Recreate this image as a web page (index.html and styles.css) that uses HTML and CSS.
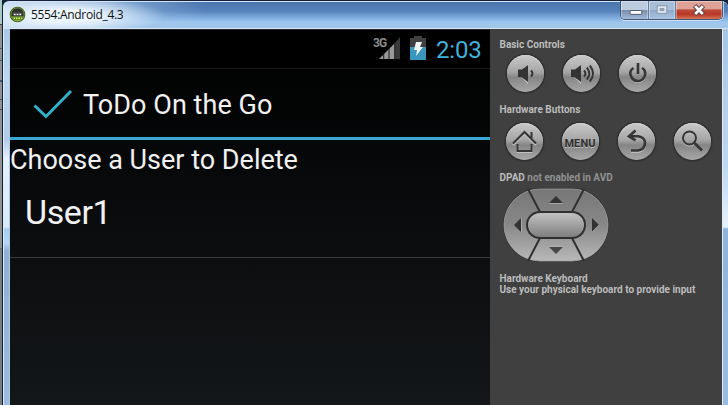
FILE: index.html
```html
<!DOCTYPE html>
<html lang="en">
<head>
<meta charset="utf-8">
<title>5554:Android_4.3</title>
<link rel="stylesheet" href="styles.css">
</head>
<body>
<div class="desktop">
  <div class="behind"></div>
  <main class="window">
    <header class="titlebar">
      <svg class="app-icon" viewBox="0 0 18 18"><circle cx="9" cy="9" r="8.300" fill="#47651f"/><circle cx="9" cy="9" r="7.200" fill="#8fb83c"/><path d="M2.500 11V7.500Q3.500 2.500 9 2.500t6.500 5V11z" fill="#303430"/><path d="M4 7.500h10" stroke="#555c50"/><path d="M5 9h2m1 0h2m1 0h2" stroke="#fff" stroke-width="1.500"/><path d="M3 12h12l-1.500 2.500h-9z" fill="#547a21"/><path d="M5 13h1.500m1 0H9m1 0h1.500m1 0h1" stroke="#d8ff76" stroke-width="1.500"/></svg>
      <h1 class="caption">5554:Android_4.3</h1>
      <div class="controls">
        <div class="control minimize"><svg viewBox="0 0 28 19"><rect x="9.500" y="9.500" width="12" height="4" rx=".5" fill="#fff" stroke="#505c70"/></svg></div>
        <div class="control maximize"><svg viewBox="0 0 27 19"><path d="M8.500 4.500h10v8h-10z" fill="#dce4ec" stroke="#8896a8"/><path d="M11.500 7.500h4v2h-4z" fill="#9dacbf" stroke="#8896a8"/></svg></div>
        <div class="control close"><svg viewBox="0 0 47 19"><path d="M19 4.500l9 9m0-9l-9 9" stroke="#59434c" stroke-width="4.800"/><path d="M19.600 5l7.800 8m0-8l-7.800 8" stroke="#fff" stroke-width="2.800"/></svg></div>
      </div>
    </header>
    <div class="content">
      <div class="edge-left"></div>
      <section class="screen">
        <div class="statusbar">
          <div class="signal">
            <span class="network">3G</span>
            <svg class="bars" viewBox="0 0 28 24"><path d="M6 23L22 7v16z" fill="#999"/><path d="M22 7l5-6v22h-5z" fill="#393939"/><path d="M10.700 17v6M16 12v11M21.700 7v16" stroke="#1b1b1b"/></svg>
          </div>
          <svg class="battery" viewBox="0 0 16 24"><path d="M0 2h4V0h8v2h4v9H0z" fill="#404040"/><path d="M0 11h16v13H0z" fill="#3b96be"/><path d="M6 6h6l-2 5h3l-7 9 1-6H4z" fill="#f0f4f5"/></svg>
          <span class="clock">2:03</span>
        </div>
        <div class="actionbar">
          <svg class="check" viewBox="0 0 40 32"><path d="M1.500 16.500L13 27.500 38 2" fill="none" stroke="#2fb2ca" stroke-width="3"/></svg>
          <h2 class="app-title">ToDo On the Go</h2>
        </div>
        <p class="prompt">Choose a User to Delete</p>
        <div class="user-row"><span class="user-name">User1</span></div>
      </section>
      <aside class="panel">
        <h3 class="label basic">Basic Controls</h3>
        <div class="buttons first">
          <div class="round"><svg viewBox="0 0 37 37"><path class="glow" d="M11 15h4l6-6v20l-6-6h-4z"/><path class="solid" d="M11 14.500h4l6-4.500v17l-6-4.500h-4z"/><path class="line" d="M24 15.500q3 3 0 6"/></svg></div>
          <div class="round"><svg viewBox="0 0 37 37"><path class="glow" d="M8 15h4l6-6v20l-6-6H8z"/><path class="solid" d="M8 14.500h4l6-4.500v17l-6-4.500H8z"/><path class="line" d="M21 15.500q3 3 0 6m2.800-9q5 6 0 12m3-14q6.500 8 0 16"/></svg></div>
          <div class="round"><svg viewBox="0 0 37 37"><path class="shine" d="M14.500 14q-4 2.500-3 7 2 6 7.500 6t7-6q1-4.500-3-7"/><path class="line power" d="M14.500 13q-4 2.500-3 7 2 6 7.500 6t7-6q1-4.500-3-7M19 8v11"/></svg></div>
        </div>
        <h3 class="label hardware">Hardware Buttons</h3>
        <div class="buttons second">
          <div class="round"><svg viewBox="0 0 37 37"><path class="shine" d="M7 22L18.500 10.500 30 22M11.500 22v7h14v-7"/><path class="line" d="M7 20.500L18.500 9 30 20.500M25.500 9v6M11.500 21v7h14v-7"/></svg></div>
          <div class="round"><span class="menu">MENU</span></div>
          <div class="round"><svg viewBox="0 0 37 37"><path class="shine" d="M11 14h9q7 1 7 7.500T20 29h-7"/><path class="line back" d="M17.500 7.500L11 13.300l6.500 4M11 13.300h9q7 1 7 7T20 27.500h-7"/></svg></div>
          <div class="round"><svg viewBox="0 0 37 37"><circle class="shine" cx="15.500" cy="16" r="6.500"/><circle class="line" cx="15.500" cy="15" r="6.500"/><path class="line back" d="M20.500 20l7.500 7.500"/></svg></div>
        </div>
        <h3 class="label dpad-label">DPAD <span class="disabled">not enabled in AVD</span></h3>
        <svg class="dpad" viewBox="0 0 108 76">
          <defs>
            <linearGradient id="pad" x2="0" y2="1"><stop stop-color="#777"/><stop offset=".5" stop-color="#888"/><stop offset="1" stop-color="#b8b8b8"/></linearGradient>
            <linearGradient id="key" x2="0" y2="1"><stop stop-color="#c5c5c5"/><stop offset="1" stop-color="#7c7c7c"/></linearGradient>
          </defs>
          <rect x="1" y="1" width="106" height="74" rx="37" fill="#303030"/>
          <rect x="2" y="2" width="104" height="72" rx="36" fill="url(#pad)" stroke="#aaa" stroke-width=".7"/>
          <path d="M26 2l12 23M82 2L70 25M26 74l12-23M82 74L70 51" stroke="#303030" stroke-width="2"/>
          <rect x="25" y="25" width="58" height="26" rx="13" fill="url(#key)" stroke="#303030" stroke-width="2"/>
          <path d="M47 16l7-7 7 7zM19 31v14l-7-7zM90 31v14l7-7z" fill="#333"/><path d="M47 60h14l-7 7z" fill="#474747"/>
          <path d="M47 16.500h14M47 59.500h14M19.500 31v14M90 45l7-7" stroke="#b6b6b6" stroke-width=".7"/>
        </svg>
        <div class="keyboard"><p class="label kb-head">Hardware Keyboard</p><p class="label kb-text">Use your physical keyboard to provide input</p></div>
      </aside>
      <div class="edge-right"></div>
    </div>
  </main>
</div>
</body>
</html>
```

FILE: styles.css
```css
* { box-sizing: border-box; }
body { margin: 0; width: 728px; height: 405px; overflow: hidden; font-family: Roboto, "Liberation Sans", sans-serif; }
h1, h2, h3, p { margin: 0; font-weight: 400; white-space: nowrap; }
svg { display: block; flex: none; }

.desktop { display: flex; height: 405px; background: #15223c; }
.behind { width: 2px; background: linear-gradient(#a7c8c4 0 24px, #404b52 24px 25px, #8e9295 25px 48px, #53616b 48px 49px, #8e9295 49px 60px, #3f5970 60px 61px, #8e9295 61px 80px, #315c80 80px 82px, #8e9295 82px 99px, #405469 99px 100px, #8e9295 100px 109px, #405469 109px 110px, #8e9295 110px 248px, #656b78 248px 249px, #767b86 249px); }
.window { flex: 1; min-width: 0; border-top: 1px solid #14213a; border-left: 1px solid #17212c; border-radius: 7px 7px 0 0; overflow: hidden; background: #9bbee4; }
.titlebar {
  display: flex; height: 28px; padding-left: 6px; border-top: 1px solid #d6e5f5; border-bottom: 1px solid #d5e5f4; border-left: 1px solid #d9eafb; border-radius: 6px 6px 0 0;
  background: radial-gradient(ellipse 100px 19px at 62px 14px, #ecf5fd 30%, rgba(222, 236, 249, 0) 100%), linear-gradient(90deg, #c5dcf0 0, rgba(164, 200, 235, .6) 110px, rgba(164, 200, 235, 0) 200px), linear-gradient(#4a75ad 0, #5682bb 9px, #80ade0 16px, #9dc6ee 20px, #a2c5e7);
}
.app-icon { width: 17px; height: 17px; margin: 4px 0 0 -1px; }
.caption { margin: 5px 0 0 5px; font: 12px/16px "Open Sans", "Noto Sans", sans-serif; letter-spacing: -.32px; color: #111; }
.controls { display: flex; width: 103px; height: 19px; margin: -1px 5px 0 auto; border: 1px solid #425875; border-top: 0; border-radius: 0 0 5px 5px; box-shadow: 0 1px 0 #cfe1f3, 1px 0 0 #b6cfeb; overflow: hidden; }
.control { height: 19px; border-left: 1px solid #667d9b; box-shadow: inset 0 0 0 1px rgba(255, 255, 255, .35); }
.control svg { width: 100%; height: 19px; }
.minimize { width: 27px; border-left: 0; background: linear-gradient(#bccbde 45%, #788fae 50%, #a5c0df); }
.maximize { width: 27px; background: linear-gradient(#a8bdd6 45%, #91aac9 50%, #adc9e7); }
.close { width: 47px; background: linear-gradient(#dda195 40%, #bd4936 48%, #b83926 70%, #d97e65); }

.content { display: flex; height: 376px; }
.edge-left { width: 7px; border-left: 1px solid #d9eafa; border-right: 1px solid #a9c8e3; background: linear-gradient(#a9c8e8 0, #bdd7ef 50px, #b1cbea 110px, #e5f1fd 130px, #d9eafa 198px, #a9cdf0 200px, #b4d7f7 214px, #8fafd5 222px, #9bbce1 375px); }
.screen { width: 480px; border-top: 1px solid #25292d; background: linear-gradient(#000 0, #030404 75px, #080a0c 160px, #101214 300px, #13171a 376px); color: #f1f1f1; }
.statusbar { display: flex; height: 39px; background: #000; border-bottom: 1px solid #171717; padding: 6px 9px 0 363px; }
.signal { position: relative; width: 28px; height: 24px; }
.network { position: absolute; left: 0; top: 0; font-size: 12px; font-weight: 700; line-height: 14px; letter-spacing: -.8px; color: #8b8b8b; }
.bars { width: 28px; height: 24px; }
.battery { width: 16px; height: 24px; margin-left: 9px; }
.clock { margin: 0 0 0 10px; font-size: 24px; line-height: 28px; letter-spacing: -.2px; color: #41b1dc; }
.actionbar { display: flex; height: 71px; border-bottom: 3px solid #3ba8d5; padding: 20px 0 0 23px; }
.check { width: 40px; height: 32px; }
.app-title { margin-left: 10px; font-size: 27px; line-height: 32px; letter-spacing: .05px; }
.prompt { font-size: 27px; line-height: 32px; height: 48px; padding-top: 4px; }
.user-row { height: 70px; padding: 4px 0 0 15px; border-bottom: 1px solid #36383a; }
.user-name { font-size: 34px; line-height: 40px; letter-spacing: -.4px; }

.panel { width: 232px; background: #404040; padding: 10px 0 0 9.5px; }
.label { font-size: 10px; line-height: 12px; font-weight: 700; color: #bcbcbc; }
.buttons { display: flex; gap: 19px; }
.first { margin: 4px 0 0 7px; }
.second { margin: 7px 0 0 6px; }
.round { display: flex; align-items: center; justify-content: center; width: 37px; height: 37px; border-radius: 50%; background: linear-gradient(#c9c9c9 0, #a6a6a6 46%, #858585 60%, #a8a8a8); box-shadow: 0 0 1px 1.500px #303030, inset 0 1px 0 #d0d0d0; }
.round svg { width: 37px; height: 37px; }
.solid { fill: #333; }
.glow { fill: #c5c5c5; }
.line { fill: none; stroke: #353535; stroke-width: 2; }
.shine { fill: none; stroke: #c0c0c0; stroke-width: 2; }
.power, .back { stroke-width: 2.600; }
.hardware { margin-top: 12px; }
.menu { font-size: 11px; font-weight: 700; color: #303030; text-shadow: 0 1px #bbb; letter-spacing: .1px; padding-top: 3px; }
.dpad-label { margin-top: 12px; }
.disabled { color: #929292; }
.dpad { width: 108px; height: 76px; margin: 3px 0 0 2.5px; }
.keyboard { margin-top: 10px; }
.keyboard .label { line-height: 11px; }
.edge-right { flex: 1; border-left: 1px solid #e0edf9; background: linear-gradient(#a5c6e7 0, #b6d0eb 80px, #bfd7ef 140px, #e8f2fc 198px, #8fb3da 200px, #9bbce1); }
```
